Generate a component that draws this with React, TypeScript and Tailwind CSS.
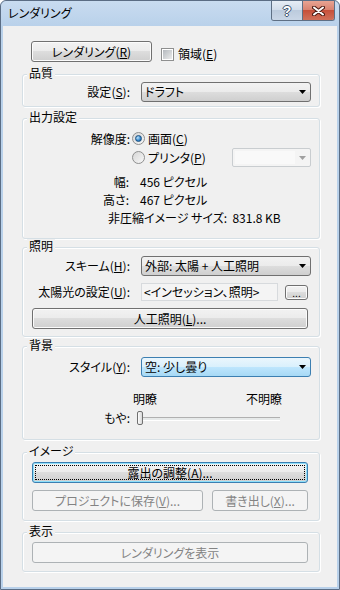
import React from "react"

const btn =
  "flex items-center justify-center rounded-[3px] border border-[#707070] bg-[linear-gradient(#f2f2f2_0%,#ebebeb_50%,#dddddd_50%,#cfcfcf_100%)] shadow-[inset_0_0_0_1px_#fbfbfb] text-black"
const btnOff =
  "flex items-center justify-center rounded-[3px] border border-[#adb2b5] bg-[#f4f4f4] text-[#838383]"
const btnFocus =
  "flex items-center justify-center rounded-[3px] border border-[#3c7fb1] bg-[linear-gradient(#f2f2f2_0%,#ebebeb_50%,#dddddd_50%,#cfcfcf_100%)] shadow-[inset_0_0_0_1px_#8ee0fb] text-black outline-1 outline-dotted outline-black outline-offset-[-4px]"

const Key = ({ k }: { k: string }) => (
  <>
    (<span className="underline underline-offset-[1px]">{k}</span>)
  </>
)

const Arrow = ({ color = "#000" }: { color?: string }) => (
  <svg width="7" height="4" viewBox="0 0 7 4">
    <path d="M0 0h7L3.5 4z" fill={color} />
  </svg>
)

const Combo = ({ children, hover }: { children: React.ReactNode; hover?: boolean }) => (
  <div
    className={
      "ml-[11px] flex h-[20px] w-[170px] items-center rounded-[3px] border pl-[3px] pr-[4px] " +
      (hover
        ? "border-[#3c7fb1] bg-[linear-gradient(#eaf6fd_0%,#d9f0fc_50%,#bee6fd_50%,#a7d9f5_100%)]"
        : "border-[#707070] bg-[linear-gradient(#f2f2f2_0%,#ebebeb_50%,#dddddd_50%,#cfcfcf_100%)]")
    }
  >
    <span className="flex-1 whitespace-nowrap">{children}</span>
    <Arrow />
  </div>
)

const Radio = ({ checked }: { checked?: boolean }) => (
  <span className="flex h-[13px] w-[13px] items-center justify-center rounded-full border border-[#8e8f8f] bg-[linear-gradient(135deg,#d6d6d6,#f8f8f8)]">
    {checked && (
      <span className="h-[7px] w-[7px] rounded-full border border-[#1b4f7e] bg-[radial-gradient(circle_at_35%_35%,#bfe4fb,#2f82c9_60%,#15508c)]" />
    )}
  </span>
)

const Group = ({
  title,
  className,
  children,
}: {
  title: string
  className: string
  children: React.ReactNode
}) => (
  <div
    className={
      "relative rounded-[3px] border border-[#d5dfe5] shadow-[inset_1px_1px_0_#fff,1px_1px_0_#fff] " +
      className
    }
  >
    <span className="absolute left-[4px] top-[-9px] bg-[#f0f0f0] px-[2px] leading-[14px]">{title}</span>
    {children}
  </div>
)

const Label = ({ children, w = "w-[107px]" }: { children: React.ReactNode; w?: string }) => (
  <span className={w + " shrink-0 whitespace-nowrap text-right"}>{children}</span>
)

export default function App() {
  return (
    <div className="flex h-[590px] w-[340px] flex-col rounded-t-[6px] border border-[#5b6d84] bg-[#b9d1ea] font-['Noto_Sans_CJK_JP',sans-serif] text-[12px] leading-[14px] text-black [font-feature-settings:'palt']">
      {/* title bar */}
      <div className="flex h-[25px] shrink-0 rounded-t-[6px] bg-[linear-gradient(#c9dcf0,#b9d1ea)]">
        <span className="ml-[7px] mt-[5px] text-[12px]">レンダリング</span>
        <div className="ml-auto mr-[4px] flex h-[20px] overflow-hidden rounded-b-[3px] border border-t-0 border-[#5e6f84]">
          <div className="flex w-[31px] items-center justify-center border-r border-[#5e6f84] bg-[linear-gradient(#e6edf5_0%,#d1dcea_50%,#bccbdd_50%,#c9d6e6_100%)] font-['Liberation_Sans',sans-serif] text-[14px] font-bold text-white [text-shadow:1px_0_#3f546e,-1px_0_#3f546e,0_1px_#3f546e,0_-1px_#3f546e]">
            ?
          </div>
          <div className="flex w-[31px] items-center justify-center bg-[linear-gradient(#e8a493_0%,#d8806d_50%,#c7503a_50%,#d0705a_100%)]">
            <svg width="13" height="10" viewBox="0 0 13 10">
              <path d="M2 1.5l9 7M11 1.5l-9 7" stroke="#4a1a12" strokeWidth="4" strokeLinecap="round" />
              <path d="M2 1.5l9 7M11 1.5l-9 7" stroke="#fff" strokeWidth="2" strokeLinecap="round" />
            </svg>
          </div>
        </div>
      </div>

      {/* client */}
      <div className="mx-[2px] mb-[2px] flex-1 bg-[#f0f0f0]">
        <div className="ml-[28px] mt-[15px] flex">
          <div className={btn + " h-[21px] w-[121px]"}>
            レンダリング<Key k="R" />
          </div>
          <div className="ml-[9px] mt-[6px] flex items-center gap-[4px] self-start">
            <span className="flex h-[13px] w-[13px] items-center justify-center border border-[#8e8f8f] bg-white">
              <span className="h-[9px] w-[9px] bg-[linear-gradient(135deg,#b4b9be,#ececec)]" />
            </span>
            <span>
              領域<Key k="E" />
            </span>
          </div>
        </div>

        <div className="ml-[19px] w-[298px]">
          <Group title="品質" className="mt-[12px] h-[33px] pt-[7px]">
            <div className="flex h-[20px] items-center">
              <Label>
                設定<Key k="S" />:
              </Label>
              <Combo>ドラフト</Combo>
            </div>
          </Group>

          <Group title="出力設定" className="mt-[11px] h-[121px] pt-[10px]">
            <div className="flex h-[19px] items-center">
              <Label>解像度:</Label>
              <span className="ml-[2px]">
                <Radio checked />
              </span>
              <span className="ml-[3px]">
                画面<Key k="C" />
              </span>
            </div>
            <div className="flex h-[19px] items-center">
              <span className="ml-[109px]">
                <Radio />
              </span>
              <span className="ml-[3px]">
                プリンタ<Key k="P" />
              </span>
              <div className="ml-auto mr-[8px] flex h-[19px] w-[79px] items-center rounded-[2px] border border-[#c9cdd0] bg-[#f4f4f4] pr-[4px]">
                <span className="ml-[2px] h-[13px] w-[60px] bg-[#f9f9f9]" />
                <span className="ml-auto">
                  <Arrow color="#a0a0a0" />
                </span>
              </div>
            </div>
            <div className="mt-[6px] flex h-[18px] items-center">
              <Label w="w-[106px]">幅:</Label>
              <span className="ml-[11px]">456 ピクセル</span>
            </div>
            <div className="flex h-[18px] items-center">
              <Label w="w-[106px]">高さ:</Label>
              <span className="ml-[11px]">467 ピクセル</span>
            </div>
            <div className="flex h-[18px] items-center pl-[85px]">
              <span className="whitespace-nowrap">非圧縮イメージ サイズ:&nbsp;&nbsp;831.8 KB</span>
            </div>
          </Group>

          <Group title="照明" className="mt-[8px] h-[90px] pt-[8px]">
            <div className="flex h-[20px] items-center">
              <Label>
                スキーム<Key k="H" />:
              </Label>
              <Combo>外部: 太陽 + 人工照明</Combo>
            </div>
            <div className="mt-[7px] flex h-[18px] items-center">
              <Label>
                太陽光の設定<Key k="U" />:
              </Label>
              <div className="ml-[11px] flex h-[18px] w-[137px] items-center border border-[#d7dadd] bg-[#f4f4f4] pl-[2px] whitespace-nowrap">
                &lt;インセッション、照明&gt;
              </div>
              <div className={btn + " ml-[7px] h-[15px] w-[23px] items-end pb-[1px] text-[10px] leading-[10px]"}>...</div>
            </div>
            <div className={btn + " ml-[9px] mt-[7px] h-[21px] w-[276px]"}>
              人工照明<Key k="L" />...
            </div>
          </Group>

          <Group title="背景" className="mt-[9px] h-[94px] pt-[10px]">
            <div className="flex h-[20px] items-center">
              <Label>
                スタイル<Key k="Y" />:
              </Label>
              <Combo hover>空: 少し曇り</Combo>
            </div>
            <div className="ml-[110px] mt-[15px] flex h-[14px] w-[149px] justify-between">
              <span>明瞭</span>
              <span>不明瞭</span>
            </div>
            <div className="mt-[5px] flex h-[14px] items-center">
              <Label>もや:</Label>
              <span className="ml-[7px] h-[14px] w-[6px] rounded-[2px] border border-[#707070] bg-[linear-gradient(90deg,#fdfdfd,#d8d8d8)]" />
              <span className="h-[3px] w-[137px] border-t border-[#b0b0b0] bg-[#e7eaea] shadow-[0_1px_0_#fff]" />
            </div>
          </Group>

          <Group title="イメージ" className="mt-[12px] h-[69px] pt-[9px]">
            <div className={btnFocus + " ml-[9px] h-[21px] w-[276px]"}>
              露出の調整<Key k="A" />...
            </div>
            <div className="ml-[9px] mt-[7px] flex gap-[9px]">
              <div className={btnOff + " h-[21px] w-[171px]"}>
                プロジェクトに保存<Key k="V" />...
              </div>
              <div className={btnOff + " h-[21px] w-[96px]"}>
                書き出し<Key k="X" />...
              </div>
            </div>
          </Group>

          <Group title="表示" className="mt-[11px] h-[40px] pt-[9px]">
            <div className={btnOff + " ml-[9px] h-[21px] w-[276px]"}>レンダリングを表示</div>
          </Group>
        </div>
      </div>
    </div>
  )
}
